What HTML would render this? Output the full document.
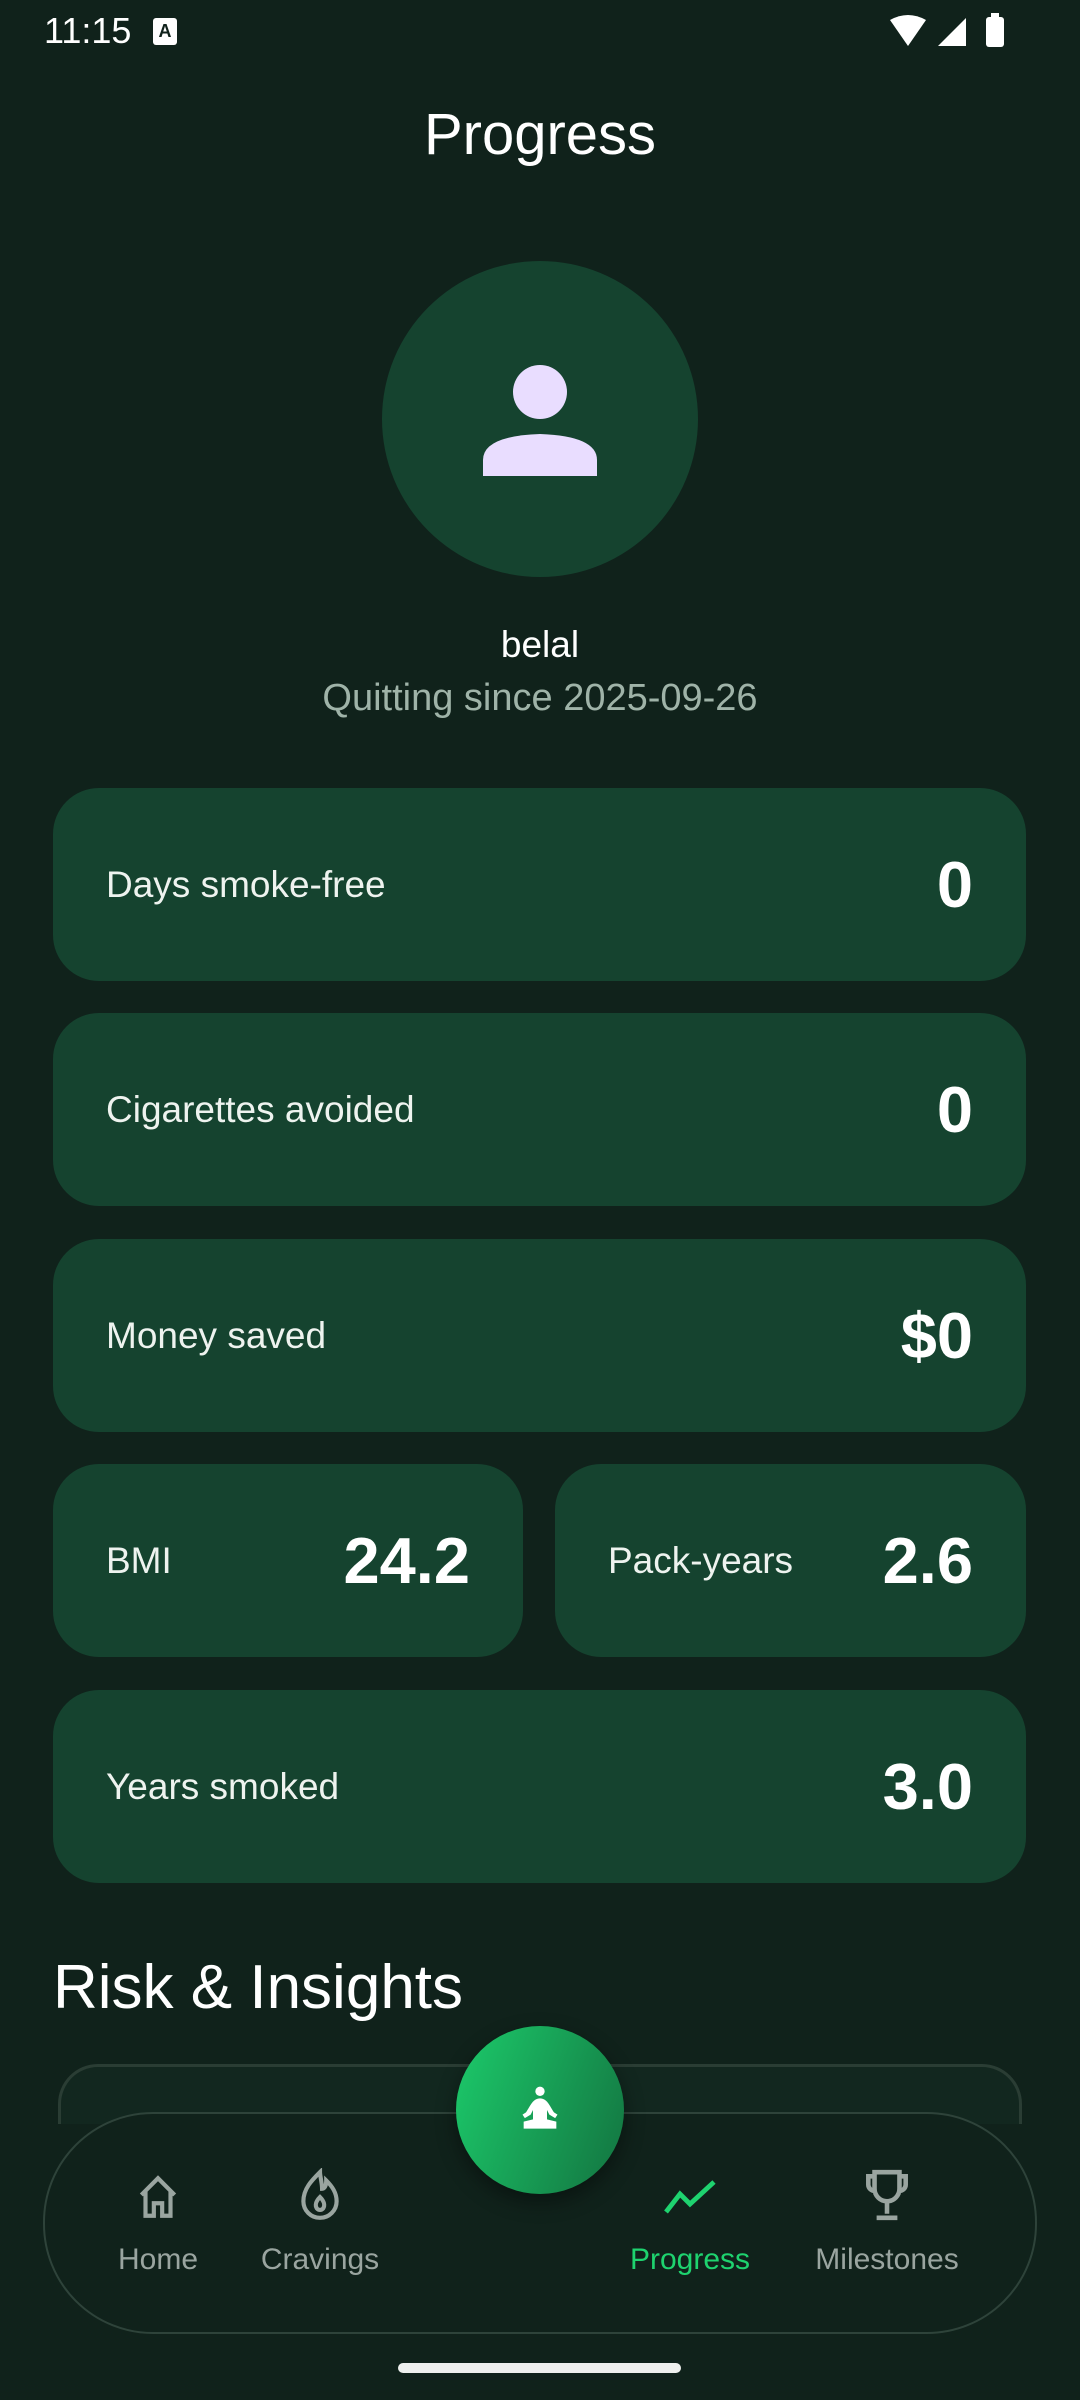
<!DOCTYPE html>
<html><head><meta charset="utf-8"><style>
*{margin:0;padding:0;box-sizing:border-box}
body{width:1080px;height:2400px;background:#10221b;font-family:"Liberation Sans",sans-serif;color:#fff;position:relative;overflow:hidden}
.abs{position:absolute}
.card{position:absolute;background:#15432f;border-radius:46px;display:flex;align-items:center;justify-content:space-between;padding:0 53px}
.lab{font-size:37px;color:#eef3ef}
.val{font-size:65px;font-weight:bold}
.nav{position:absolute;text-align:center;font-size:30px;color:#9aa5a0;width:200px}
</style></head><body>
<div class="abs" style="left:44px;top:10px;font-size:36px">11:15</div>
<div class="abs" style="left:153px;top:18px;width:24px;height:27px;background:#fff;border-radius:3px;color:#10221b;font-size:18px;font-weight:bold;text-align:center;line-height:27px">A</div>
<svg class="abs" style="left:890px;top:12px" width="120" height="40" viewBox="0 0 120 40">
<path d="M0 8 Q18 -2 36 8 L18 34 Z" fill="#fff"/>
<path d="M48 34 L76 6 L76 34 Z" fill="#fff"/>
<rect x="96" y="5" width="18" height="30" rx="3" fill="#fff"/><rect x="101" y="1" width="8" height="5" fill="#fff"/>
</svg>
<div class="abs" style="left:0;width:1080px;top:101px;text-align:center;font-size:58px">Progress</div>
<div class="abs" style="left:382px;top:261px;width:316px;height:316px;border-radius:50%;background:#15432f"></div>
<svg class="abs" style="left:480px;top:360px" width="120" height="120" viewBox="0 0 120 120">
<circle cx="60" cy="32" r="27" fill="#e9ddff"/>
<path d="M3 116 L3 100 Q3 76 60 74 Q117 76 117 100 L117 116 Z" fill="#e9ddff"/>
</svg>
<div class="abs" style="left:0;width:1080px;top:624px;text-align:center;font-size:37px">belal</div>
<div class="abs" style="left:0;width:1080px;top:677px;text-align:center;font-size:38px;color:#9fb3a8">Quitting since 2025-09-26</div>
<div class="card" style="left:53px;top:788px;width:973px;height:193px"><span class="lab">Days smoke-free</span><span class="val">0</span></div>
<div class="card" style="left:53px;top:1013px;width:973px;height:193px"><span class="lab">Cigarettes avoided</span><span class="val">0</span></div>
<div class="card" style="left:53px;top:1239px;width:973px;height:193px"><span class="lab">Money saved</span><span class="val">$0</span></div>
<div class="card" style="left:53px;top:1464px;width:470px;height:193px"><span class="lab">BMI</span><span class="val">24.2</span></div>
<div class="card" style="left:555px;top:1464px;width:471px;height:193px"><span class="lab">Pack-years</span><span class="val">2.6</span></div>
<div class="card" style="left:53px;top:1690px;width:973px;height:193px"><span class="lab">Years smoked</span><span class="val">3.0</span></div>
<div class="abs" style="left:53px;top:1952px;font-size:62px">Risk &amp; Insights</div>
<div class="abs" style="left:58px;top:2064px;width:964px;height:60px;border:3px solid #2a3d34;border-bottom:none;border-radius:40px 40px 0 0;background:#12271f"></div>
<div class="abs" style="left:43px;top:2112px;width:994px;height:222px;border:2px solid #2e433a;border-radius:110px;background:#10221b"></div>
<div class="abs" style="left:456px;top:2026px;width:168px;height:168px;border-radius:50%;background:linear-gradient(110deg,#1ccb6b,#137340);box-shadow:0 8px 20px rgba(0,0,0,.4)"></div>
<svg class="abs" style="left:512px;top:2082px" width="56" height="56" viewBox="0 0 24 24" fill="#fff">
<circle cx="12" cy="4" r="2"/>
<path d="M12 7 C9 7 8 10 6 13 L4.5 14 L5.5 15.5 L8 14 L9 12 L9 16 L5 17 L5 20 L19 20 L19 17 L15 16 L15 12 L16 14 L18.5 15.5 L19.5 14 L18 13 C16 10 15 7 12 7 Z M10 18.2 L14 18.2 L14 17.2 L10 17.2 Z" fill="#fff"/>
</svg>
<svg class="abs" style="left:133px;top:2172px" width="50" height="50" viewBox="0 0 24 24" fill="none" stroke="#9aa5a0" stroke-width="2"><path d="M4 11 L12 3 L20 11 M6 9 V21 H10 V15 H14 V21 H18 V9"/></svg>
<svg class="abs" style="left:295px;top:2168px" width="50" height="54" viewBox="0 0 24 26" fill="none" stroke="#9aa5a0" stroke-width="2"><path d="M12 2 C8 6 4 10 4 16 A8 8 0 0 0 20 16 C20 12 18 9 15 6 C15 9 14 10 13 10 C13 7 12 4 12 2 Z"/><path d="M12 14 C10 16 9.5 18 10.5 19.5 A2 2 0 0 0 13.5 19.5 C14.5 18 14 16 12 14 Z"/></svg>
<svg class="abs" style="left:664px;top:2180px" width="52" height="34" viewBox="0 0 26 17" fill="none" stroke="#1ed36f" stroke-width="2.4"><path d="M1 16 L8 7 L13 12 L25 1"/></svg>
<svg class="abs" style="left:862px;top:2168px" width="50" height="54" viewBox="0 0 24 26" fill="none" stroke="#9aa5a0" stroke-width="2.2"><path d="M6 2 H18 V10 A6 6 0 0 1 6 10 Z M6 4 H3 V8 A3 3 0 0 0 6 11 M18 4 H21 V8 A3 3 0 0 1 18 11 M12 16 V22 M7 24 H17"/></svg>
<div class="nav" style="left:58px;top:2243px">Home</div>
<div class="nav" style="left:220px;top:2243px">Cravings</div>
<div class="nav" style="left:590px;top:2243px;color:#1ed36f">Progress</div>
<div class="nav" style="left:787px;top:2243px">Milestones</div>
<div class="abs" style="left:398px;top:2363px;width:283px;height:10px;border-radius:5px;background:#eef0ee"></div>
</body></html>
